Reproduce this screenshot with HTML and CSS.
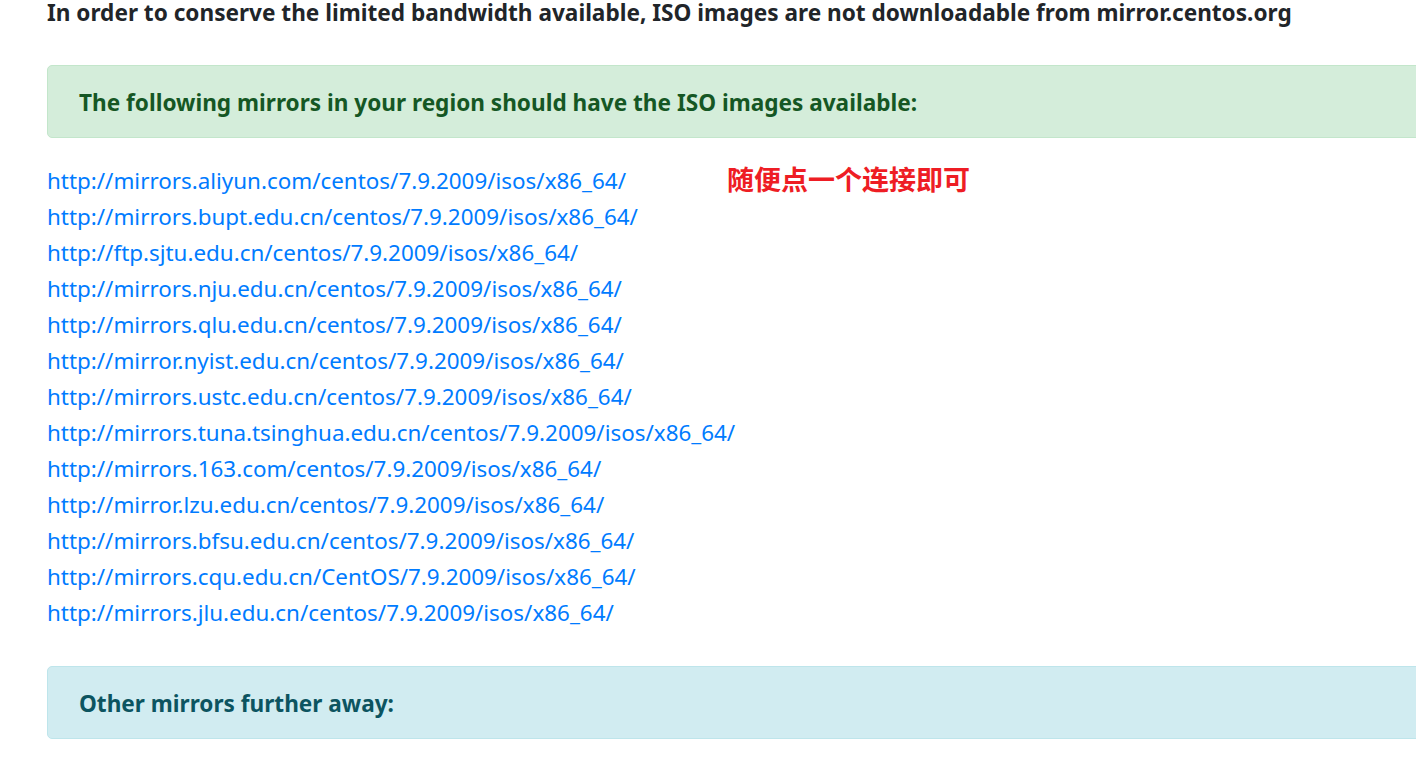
FILE: index.html
```html
<!DOCTYPE html>
<html lang="en">
<head>
<meta charset="utf-8">
<title>CentOS Mirrors</title>
<link rel="stylesheet" href="styles.css">
</head>
<body>
<main class="page">
  <h2 class="notice">In order to conserve the limited bandwidth available, ISO images are not downloadable from mirror.centos.org</h2>

  <div class="alert alert-success">
    <h3 class="alert-title">The following mirrors in your region should have the ISO images available:</h3>
  </div>

  <div class="mirror-list">
    <span class="annotation">随便点一个连接即可</span>
    <a href="#">http://mirrors.aliyun.com/centos/7.9.2009/isos/x86_64/</a>
    <a href="#">http://mirrors.bupt.edu.cn/centos/7.9.2009/isos/x86_64/</a>
    <a href="#">http://ftp.sjtu.edu.cn/centos/7.9.2009/isos/x86_64/</a>
    <a href="#">http://mirrors.nju.edu.cn/centos/7.9.2009/isos/x86_64/</a>
    <a href="#">http://mirrors.qlu.edu.cn/centos/7.9.2009/isos/x86_64/</a>
    <a href="#">http://mirror.nyist.edu.cn/centos/7.9.2009/isos/x86_64/</a>
    <a href="#">http://mirrors.ustc.edu.cn/centos/7.9.2009/isos/x86_64/</a>
    <a href="#">http://mirrors.tuna.tsinghua.edu.cn/centos/7.9.2009/isos/x86_64/</a>
    <a href="#">http://mirrors.163.com/centos/7.9.2009/isos/x86_64/</a>
    <a href="#">http://mirror.lzu.edu.cn/centos/7.9.2009/isos/x86_64/</a>
    <a href="#">http://mirrors.bfsu.edu.cn/centos/7.9.2009/isos/x86_64/</a>
    <a href="#">http://mirrors.cqu.edu.cn/CentOS/7.9.2009/isos/x86_64/</a>
    <a href="#">http://mirrors.jlu.edu.cn/centos/7.9.2009/isos/x86_64/</a>
  </div>

  <div class="alert alert-info">
    <h3 class="alert-title">Other mirrors further away:</h3>
  </div>
</main>
</body>
</html>
```
FILE: styles.css
```css
html, body {
  margin: 0;
  padding: 0;
  overflow: hidden;
  background: #fff;
}

body {
  font-family: "Noto Sans", "Open Sans", sans-serif;
  color: #212529;
}

.page {
  width: 1440px;
  padding-left: 47px;
  display: flex;
  flex-direction: column;
}

.notice {
  margin: 0;
  font-size: 22.6px;
  line-height: 25px;
  font-weight: 700;
  color: #212529;
  white-space: nowrap;
}

.alert {
  border: 1px solid transparent;
  border-radius: 5px;
  padding: 22px 31px 19px;
}

.alert-success {
  margin-top: 40px;
  background: #d4edda;
  border-color: #c3e6cb;
  color: #155724;
}

.alert-info {
  margin-top: 35px;
  background: #d1ecf1;
  border-color: #bee5eb;
  color: #0c5460;
}

.alert-title {
  margin: 0;
  font-size: 22.6px;
  line-height: 30px;
  font-weight: 700;
  white-space: nowrap;
}

.mirror-list {
  position: relative;
  margin-top: 25px;
  display: flex;
  flex-direction: column;
  align-items: flex-start;
}

.mirror-list a {
  font-size: 22.4px;
  line-height: 36px;
  color: #007bff;
  text-decoration: none;
  white-space: nowrap;
}

.annotation {
  position: absolute;
  left: 680px;
  top: -2px;
  font-family: "Noto Sans CJK SC", sans-serif;
  font-size: 27px;
  line-height: 36px;
  font-weight: 700;
  color: #ee1d24;
  white-space: nowrap;
}
```
